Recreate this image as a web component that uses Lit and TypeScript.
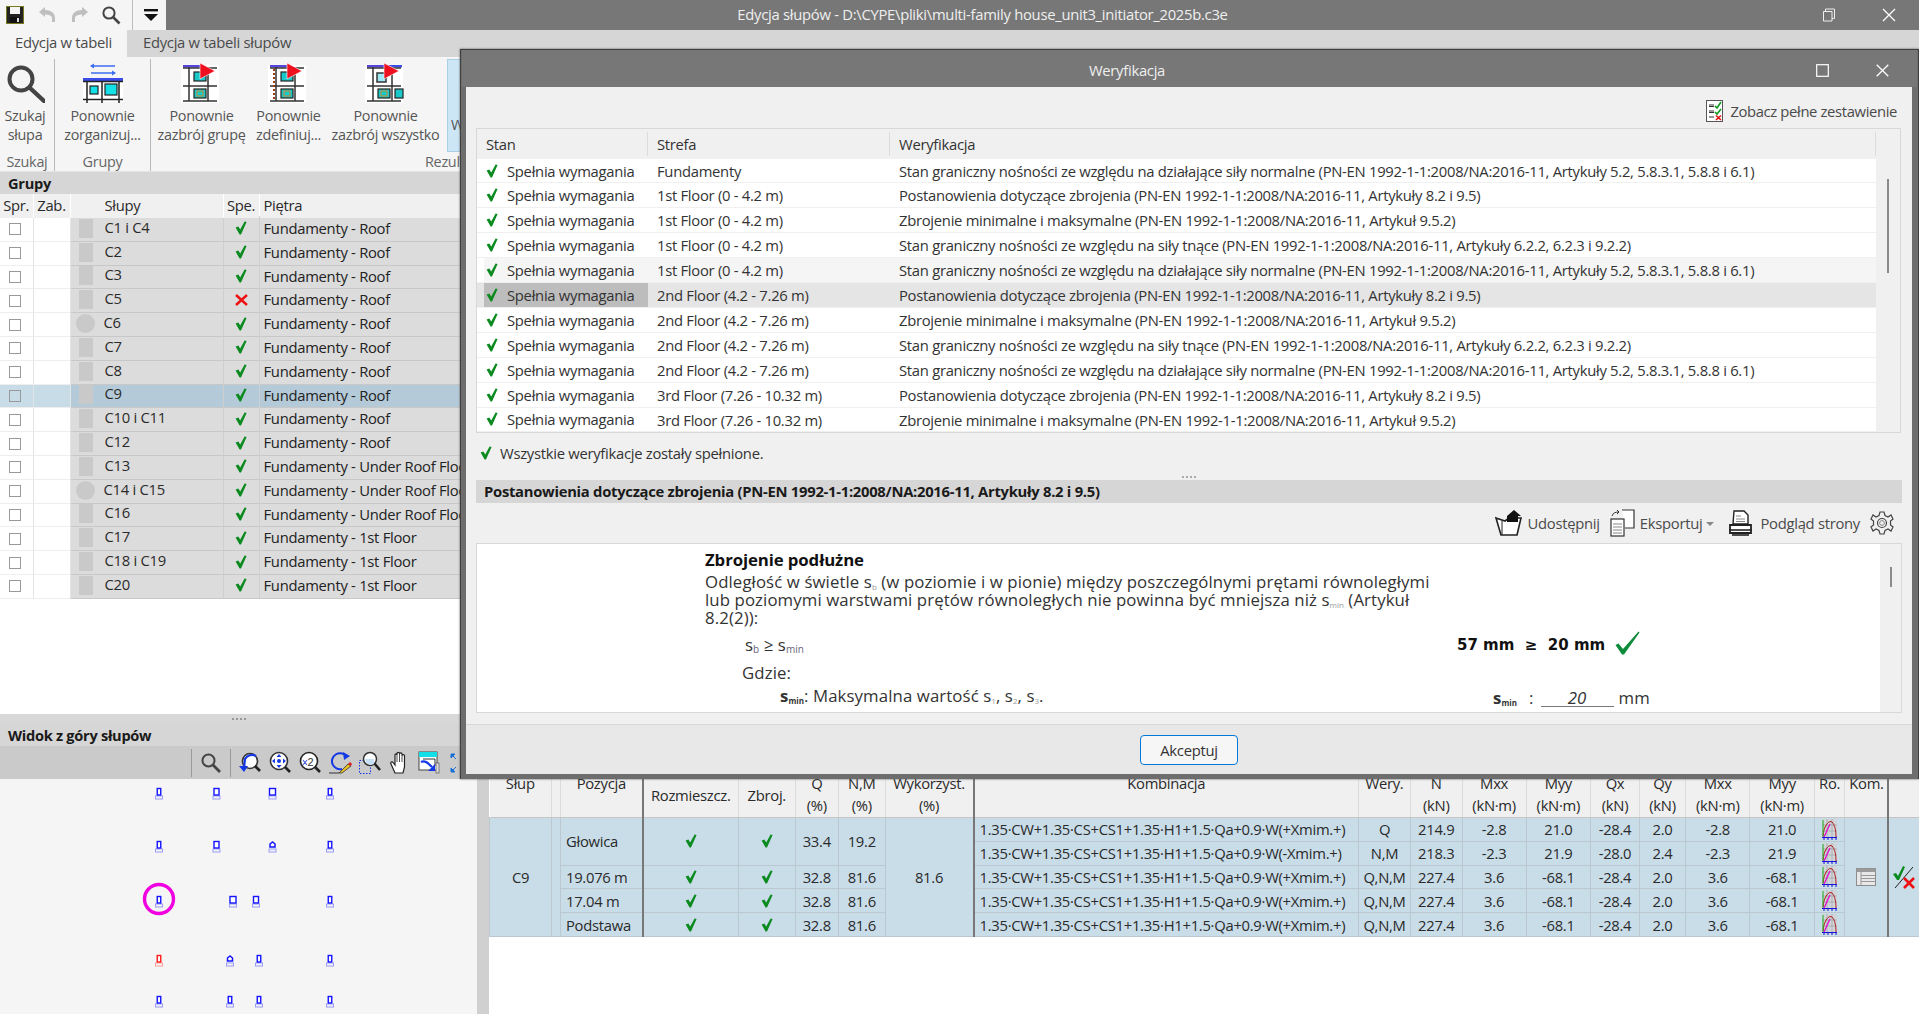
import { LitElement, html, css, svg } from "lit";
import { customElement } from "lit/decorators.js";

const check = (w = 12, h = 14) => html`<svg class="ico" width=${w} height=${h} viewBox="0 0 12 14"><path d="M0.6 6.6 L3.4 5.6 L5.2 8.6 L9.6 0.4 L11.6 0.9 L6 13.6 L4.6 13.6 Z" fill="#0b8a1f"/></svg>`;
const cross = html`<svg class="ico" width="13" height="12" viewBox="0 0 13 12"><path d="M1 1 L12 11 M12 1 L1 11" stroke="#ee1111" stroke-width="2.4"/></svg>`;

const S1 = "Stan graniczny nośności ze względu na działające siły normalne (PN-EN 1992-1-1:2008/NA:2016-11, Artykuły 5.2, 5.8.3.1, 5.8.8 i 6.1)";
const S2 = "Postanowienia dotyczące zbrojenia (PN-EN 1992-1-1:2008/NA:2016-11, Artykuły 8.2 i 9.5)";
const S3 = "Zbrojenie minimalne i maksymalne (PN-EN 1992-1-1:2008/NA:2016-11, Artykuł 9.5.2)";
const S4 = "Stan graniczny nośności ze względu na siły tnące (PN-EN 1992-1-1:2008/NA:2016-11, Artykuły 6.2.2, 6.2.3 i 9.2.2)";
const F1 = "1st Floor (0 - 4.2 m)";
const F2 = "2nd Floor (4.2 - 7.26 m)";
const F3 = "3rd Floor (7.26 - 10.32 m)";

const checks: [string, string][] = [
  ["Fundamenty", S1],
  [F1, S2], [F1, S3], [F1, S4], [F1, S1],
  [F2, S2], [F2, S3], [F2, S4], [F2, S1],
  [F3, S2], [F3, S3],
];

const ROOF = "Fundamenty - Roof";
const UNDER = "Fundamenty - Under Roof Floor";
const FIRST = "Fundamenty - 1st Floor";
const groups = [
  { n: "C1 i C4", f: ROOF }, { n: "C2", f: ROOF }, { n: "C3", f: ROOF },
  { n: "C5", f: ROOF, bad: true }, { n: "C6", f: ROOF, round: true },
  { n: "C7", f: ROOF }, { n: "C8", f: ROOF }, { n: "C9", f: ROOF, sel: true },
  { n: "C10 i C11", f: ROOF }, { n: "C12", f: ROOF }, { n: "C13", f: UNDER },
  { n: "C14 i C15", f: UNDER, round: true }, { n: "C16", f: UNDER },
  { n: "C17", f: FIRST }, { n: "C18 i C19", f: FIRST }, { n: "C20", f: FIRST },
];

const colWidths = [62, 9, 82, 96, 56.5, 43.5, 46.5, 88.5, 385, 52, 51.5, 64.2, 64.3, 49, 46, 64.5, 64.3, 30.7, 43.5, 31];

const KP = "1.35·CW+1.35·CS+CS1+1.35·H1+1.5·Qa+0.9·W(+Xmim.+)";
const KM = "1.35·CW+1.35·CS+CS1+1.35·H1+1.5·Qa+0.9·W(-Xmim.+)";
const results = [
  { k: KP, w: "Q", v: ["214.9", "-2.8", "21.0", "-28.4", "2.0", "-2.8", "21.0"] },
  { k: KM, w: "N,M", v: ["218.3", "-2.3", "21.9", "-28.0", "2.4", "-2.3", "21.9"] },
  { k: KP, w: "Q,N,M", v: ["227.4", "3.6", "-68.1", "-28.4", "2.0", "3.6", "-68.1"] },
  { k: KP, w: "Q,N,M", v: ["227.4", "3.6", "-68.1", "-28.4", "2.0", "3.6", "-68.1"] },
  { k: KP, w: "Q,N,M", v: ["227.4", "3.6", "-68.1", "-28.4", "2.0", "3.6", "-68.1"] },
];

// plan view pins
const pins: [number, number, number][] = [
  [159, 13, 0], [216.5, 13, 1], [272.5, 13, 2], [330, 13, 0],
  [159, 66, 0], [216.5, 66, 1], [272.5, 66, 3], [330, 66, 0],
  [159, 121, 0], [233, 121, 2], [256, 121, 1], [330, 121, 0],
  [159, 180, 4], [230, 180, 3], [259, 180, 0], [330, 180, 0],
  [159, 221, 0], [230, 221, 0], [259, 221, 0], [330, 221, 0],
];

const pin = (x: number, y: number, t: number) => {
  const c = t === 4 ? "#ff1a1a" : "#1414ff";
  const w = t === 2 ? 6 : t === 1 ? 5 : 3.5;
  const shape = t === 3
    ? svg`<path d="M${x - 2.5} ${y + 2} L${x - 2.5} ${y - 1} L${x} ${y - 3} L${x + 2.5} ${y - 1} L${x + 2.5} ${y + 2} Z" fill="#fff" stroke=${c} stroke-width="1.5"/>`
    : svg`<rect x=${x - w / 2} y=${y - 3.5} width=${w} height="6.5" fill="#fff" stroke=${c} stroke-width="1.4"/>`;
  return svg`${shape}<rect x=${x - 3.5} y=${y + 4} width="7" height="3" fill="none" stroke=${c} stroke-opacity=".4"/>`;
};

const ribbonIcon = (kind: number) => html`<svg width="40" height="40" viewBox="0 0 40 40" style="margin-left:-3px">
  <rect x="1" y="2" width="38" height="38" fill="#fff"/>
  <rect x="3" y="2" width="20" height="2.4" fill="#5544dd"/>
  ${kind === 2 ? svg`<rect x="24" y="2" width="14" height="2.4" fill="#3c4ce8"/>` : ""}
  <path d="M3 5 H37 M3 23 H37 M3 38 H37 M9 4 V38.5 M28 4 V38.5" stroke="#333" stroke-width="1.5" fill="none"/>
  ${kind === 1 ? svg`<path d="M7 6 V38" stroke="#a03a10" stroke-width="2" stroke-dasharray="2 2"/>` : ""}
  ${kind === 2
    ? svg`<rect x="13" y="10" width="9" height="9" fill="#9fe8f5" stroke="#333" stroke-width="1.5"/><rect x="31" y="26" width="8" height="9" fill="#19c9c9" stroke="#222" stroke-width="1.2"/>`
    : svg`<rect x="14" y="9" width="12" height="9" fill="#19c9c9" stroke="#222" stroke-width="1.2"/>`}
  <rect x="14" y="26" width="12" height="9" fill="#19c9c9" stroke="#222" stroke-width="1.2"/>
  <rect x="17" y="28" width="6" height="5" fill="none" stroke="#e08020" stroke-width=".9"/>
  <path d="M20 0 L35 8 L20 16 Z" fill="#ee0f1f" stroke="#fff" stroke-width=".6"/>
</svg>`;

const toolIcons = [
  svg`<circle cx="12" cy="10" r="7.5" fill="#fff" stroke="#333" stroke-width="1.6"/><path d="M17 15 L22 20" stroke="#222" stroke-width="2.6"/><path d="M18 5 A8 8 0 0 0 7 8 L6 17" fill="none" stroke="#1438e6" stroke-width="2.2"/><path d="M1 15 L6 21 L10 15 Z" fill="#1438e6"/>`,
  svg`<circle cx="11" cy="10" r="8.5" fill="#fff" stroke="#333" stroke-width="1.6"/><path d="M17 16 L22 21" stroke="#222" stroke-width="2.6"/><path d="M11 3 L8.5 6 H13.5 Z M11 17 L8.5 14 H13.5 Z M4 10 L7 7.5 V12.5 Z M18 10 L15 7.5 V12.5 Z" fill="#1438e6"/><circle cx="11" cy="10" r="2" fill="#1438e6"/>`,
  svg`<circle cx="11" cy="10" r="8.5" fill="#fff" stroke="#222" stroke-width="1.6"/><path d="M17 16 L22 21" stroke="#222" stroke-width="2.6"/><path d="M5 9 L9 14 M9 9 L5 14" stroke="#4a62e0" stroke-width="1.1"/><text x="9.5" y="15" font-size="11" font-family="Liberation Sans" fill="#333">2</text>`,
  svg`<path d="M18 5 A8 8 0 1 0 14 18" fill="none" stroke="#1438e6" stroke-width="2"/><path d="M15 1 L22 5 L16 9 Z" fill="#1438e6"/><path d="M11 22 L20 13 L23 15 L14 22 Z" fill="#e8c020" stroke="#333" stroke-width=".8"/><path d="M20 13 L23 15 L24 13 L22 11 Z" fill="#e02020"/><path d="M1 22 H11" stroke="#333"/>`,
  svg`<rect x="1.5" y="9.5" width="11" height="13" fill="none" stroke="#1438e6" stroke-dasharray="1.5 1.5"/><circle cx="12" cy="8" r="6.5" fill="#fff" stroke="#333" stroke-width="1.5"/><path d="M7 8 H16 V13 A6 6 0 0 1 8 11 Z" fill="#c8e0f4"/><path d="M16.5 12.5 L22 19" stroke="#222" stroke-width="2.6"/>`,
  svg`<path d="M7 22 L3 13 C2 11 4 10 5.5 12 L7 14 V4 C7 2.4 9 2.4 9 4 V2.6 C9 1 11.5 1 11.5 2.6 V3 C11.5 1.6 14 1.6 14 3 V4.6 C14 3.2 16.5 3.2 16.5 4.6 V16 L15 22 Z" fill="#fff" stroke="#222" stroke-width="1.2"/><path d="M9 4 V11 M11.5 3 V11 M14 4 V11" stroke="#222" stroke-width=".8"/>`,
  svg`<rect x="1" y="1" width="18" height="18" fill="#fff" stroke="#444"/><rect x="1" y="1" width="18" height="5" fill="#14dfe8"/><path d="M5 8 H17 V15" fill="none" stroke="#333"/><path d="M3 11 C7 9 10 12 14 16" fill="none" stroke="#1438e6" stroke-width="2.2"/><path d="M10 20 L17 20 L17 13 Z" fill="#1438e6"/><rect x="18" y="12" width="3" height="10" fill="#ddd" stroke="#444" stroke-width=".6"/>`,
  svg`<path d="M3 3 L7 3 L3 7 Z M3 3 L8 8 M3 21 L7 21 L3 17 Z M3 21 L8 16 M21 8 V3 H16 Z" fill="#1a70d8" stroke="#1a70d8"/>`,
];

const roIcon = html`<svg width="15" height="21" viewBox="0 0 15 21"><rect width="15" height="20" fill="#d2d2d2" fill-opacity=".7"/>
  <path d="M0 6 H15 M0 12 H15 M5 0 V20 M10 0 V20" stroke="#9a9a9a" stroke-width=".6"/>
  <path d="M1 17 C2 6 7 1 10 3 C13 6 14 12 14 18" fill="none" stroke="#b01818" stroke-width="1"/>
  <path d="M1 1 V18" stroke="#15b015" stroke-width="1"/><path d="M2 18 L8 5" stroke="#e010d0" stroke-width="1.4"/>
  <path d="M0 18.5 H15 M2 18 V21 M6 18 V21 M10 18 V21 M14 18 V21" stroke="#1414dd" stroke-width="1"/></svg>`;

@customElement("app-root")
export class AppRoot extends LitElement {
  static styles = css`
    :host {
      display: block;
      position: relative;
      width: 100%;
      height: 1014px;
      overflow: hidden;
      font-family: "Open Sans", "Liberation Sans", sans-serif;
      font-size: 14.8px;
      letter-spacing: -0.28px;
      color: #2a2a2a;
      background: #f5f5f5;
    }
    svg { display: block; flex: none; }
    .ico { display: inline-block; }
    .app { display: flex; flex-direction: column; height: 100%; }

    .titlebar { display: flex; height: 30px; background: #777; flex: none; }
    .qat { width: 166px; background: #f5f5f5; display: flex; align-items: center; }
    .qat-btn { display: flex; justify-content: center; }
    .qat-sep { width: 1px; height: 30px; background: #bdbdbd; margin: 0 10px 0 6px; }
    .wintitle { flex: 1; text-align: center; line-height: 28px; color: #efefef; }
    .winctl { display: flex; width: 120px; align-items: center; }
    .winctl div { width: 60px; display: flex; justify-content: center; }

    .tabs { display: flex; height: 27px; background: #d6d6d6; flex: none; line-height: 25px; color: #4a4a4a; }
    .tab { padding: 0 16px; }
    .tab.on { width: 127px; box-sizing: border-box; background: #f5f5f5; text-align: center; padding: 0; }

    .ribbon { display: flex; height: 115px; flex: none; background: #f5f5f5; color: #555; border-bottom: 1px solid #e4e4e4; box-sizing: border-box; font-size: 14.4px; }
    .rgroup { display: flex; flex-direction: column; align-items: stretch; border-right: 1px solid #b8b8b8; margin: 2px 0 0; height: 112px; flex: none; }
    .rgroup.last { border-right: 0; }
    .rbtns { display: flex; height: 93px; flex: none; }
    .rbtn { display: flex; flex-direction: column; align-items: center; padding-top: 2px; text-align: center; line-height: 19px; white-space: nowrap; box-sizing: border-box; }
    .rbtn .pic { height: 44px; display: flex; align-items: center; margin-bottom: 1px; }
    .rlabel { text-align: center; line-height: 19px; color: #666; flex: none; }
    .rhigh { width: 70px; height: 93px; box-sizing: border-box; background: #cde6f6; border: 1px solid #a9cfe6; padding: 55px 0 0 3px; margin-left: 8px; }

    .body { flex: 1; display: flex; min-height: 0; }
    .left { width: 478px; flex: none; display: flex; flex-direction: column; background: #fff; }
    .phead { height: 22px; line-height: 22px; background: #d6d6d6; font-weight: 700; font-size: 14.6px; padding-left: 8px; color: #1a1a1a; flex: none; }
    .ghead, .grow { display: grid; grid-template-columns: 33.5px 37px 153px 36px 1fr; }
    .ghead { height: 24px; background: #f0f0f0; line-height: 22px; flex: none; }
    .ghead div { border-right: 1px solid #fff; text-align: center; white-space: nowrap; }
    .ghead .l { text-align: left; padding-left: 4px; }
    .ghead .sl { text-align: left; padding-left: 34px; }
    .grow { height: 23.8px; flex: none; box-sizing: border-box; border-bottom: 1px solid #c8c8c8; background: #dcdcdc; }
    .grow .w { background: #fff; border-right: 1px solid #e4e4e4; border-bottom: 1px solid #eee; margin-bottom: -1px; display: flex; align-items: center; justify-content: center; }
    .grow.sel { background: #b5cad8; }
    .grow.sel .w { background: #c8dce8; }
    .box { width: 12px; height: 12px; border: 1.5px solid #999; background: #fff; box-sizing: border-box; margin-right: 3px; }
    .sel .box { background: #c8dce8; }
    .cname { display: flex; align-items: center; border-right: 1px solid #cfcfcf; white-space: nowrap; padding-left: 8px; }
    .cname span { margin: -5px 0 0 12px; }
    .sq { width: 14px; height: 19px; background: #c9c9c9; margin-top: -2px; }
    .sq.rd { width: 19px; height: 19px; border-radius: 50%; margin: -2px -3px 0 -3px; }
    .cchk { display: flex; justify-content: center; align-items: center; border-right: 1px solid #cfcfcf; margin-top: -2px; }
    .cfl { padding-left: 4px; white-space: nowrap; line-height: 21px; color: #222; }
    .gfill { flex: 1; background: #fff; }
    .split { height: 10px; background: #d8d8d8; display: flex; justify-content: center; align-items: center; gap: 2px; flex: none; }
    .split i { width: 2px; height: 2px; background: #999; }
    .vbar { display: flex; height: 33px; background: #cacaca; flex: none; align-items: center; padding-left: 191px; }
    .vsearch { width: 38px; height: 28px; border-left: 1px solid #999; border-right: 1px solid #999; display: flex; align-items: center; justify-content: center; margin-right: 4px; }
    .vtool { width: 30px; display: flex; justify-content: center; }
    .canvas { height: 235px; flex: none; background: #f5f5f5; border-right: 1px solid #d0d0d0; }

    .gutter { width: 11px; background: #d0d0d0; flex: none; }
    .right { flex: 1; display: flex; flex-direction: column; background: #fff; min-width: 0; }
    .rspace { height: 601px; flex: none; background: #f0f0f0; }
    table.res { border-collapse: collapse; table-layout: fixed; width: 1430px; flex: none; }
    table.res th { height: 44px; font-weight: 400; background: #f0f0f0; line-height: 22px; border-right: 1px solid #dcdcdc; border-bottom: 1px solid #c6c6c6; text-align: center; vertical-align: middle; padding: 0; white-space: nowrap; overflow: hidden; }
    table.res th .up { margin-top: -2px; }
    table.res td { height: 23.8px; box-sizing: border-box; background: #c9dde9; border: 1px solid #bcc8d0; padding: 0; text-align: center; white-space: nowrap; line-height: 20px; }
    table.res td.t { text-align: left; padding-left: 5px; }
    table.res .thick { border-right: 2px solid #777; }
    table.res td svg, table.res td .ico { margin: 0 auto; display: block; }

    .dialog { position: absolute; left: 460px; top: 49px; width: 1459px; height: 730px; box-sizing: border-box; background: #6d6d6d; border: 1px solid #3f3f3f; border-bottom: 0; padding: 0 6px 5px 5px; display: flex; flex-direction: column; z-index: 5; box-shadow: 0 0 2px #555; }
    .dtitle { height: 37px; flex: none; background: #777; margin: 0 -5px 0 -4px; padding: 3px 5px 0 0; box-sizing: border-box; display: flex; align-items: center; color: #efefef; position: relative; }
    .dtitle .tt { flex: 1; text-align: center; }
    .dclient { flex: 1; background: #f0f0f0; display: flex; flex-direction: column; min-height: 0; color: #333; }
    .dtool { height: 41px; flex: none; display: flex; justify-content: flex-end; align-items: center; padding: 7px 15px 0 0; box-sizing: border-box; gap: 7px; color: #4a4a4a; letter-spacing: -0.36px; }
    .vt { height: 305px; flex: none; margin: 0 11px 0 10px; border: 1px solid #d8d8d8; display: flex; background: #fff; box-sizing: border-box; overflow: hidden; }
    .vmain { flex: 1; min-width: 0; }
    .vrow { display: grid; grid-template-columns: 171px 242px 1fr; height: 24.9px; box-sizing: border-box; border-bottom: 1px solid #f0f0f0; line-height: 24px; white-space: nowrap; }
    .vrow.h { height: 29.6px; background: #f0f0f0; border-bottom: 0; line-height: 29px; }
    .vrow.h div { border-right: 1px solid #dcdcdc; margin: 3px 0; line-height: 25px; padding-left: 9px; }
    .vrow > div { padding-left: 9px; overflow: hidden; }
    .vrow.hov { background: linear-gradient(90deg, #fff 7px, #f5f5f5 7px); }
    .vrow.cur { background: #e5e5e5; }
    .vcell1 { display: flex; align-items: center; gap: 9px; margin-left: 7px; padding-left: 2px !important; }
    .cur .vcell1 { background: #bdbdbd; }
    .scroll { width: 24px; flex: none; background: #f0f0f0; position: relative; }
    .thumb { position: absolute; width: 2px; background: #8b8b8b; }
    .status { height: 40px; flex: none; display: flex; align-items: center; padding-left: 14px; gap: 8px; }
    .dots { height: 7px; flex: none; display: flex; justify-content: center; align-items: center; gap: 2px; }
    .dots i { width: 2px; height: 2px; background: #aaa; }
    .band { height: 23px; flex: none; margin: 0 10px; background: #d6d6d6; font-weight: 700; line-height: 22px; padding-left: 8px; color: #1a1a1a; }
    .doctool { height: 40px; flex: none; display: flex; justify-content: flex-end; align-items: center; padding-right: 18px; color: #4a4a4a; }
    .doctool span { margin-left: 5px; }
    .doc { height: 170px; flex: none; margin: 0 10px; border: 1px solid #d8d8d8; box-sizing: border-box; background: #fff; display: flex; overflow: hidden; }
    .docmain { flex: 1; padding: 6px 0 0 228px; font-size: 16.8px; line-height: 18px; letter-spacing: 0.1px; }
    .doc h4 { margin: 0 0 3px; font-size: 16.8px; line-height: 20px; font-weight: 700; color: #111; letter-spacing: -0.1px; }
    .doc p { margin: 0; width: 745px; }
    .drow { display: grid; grid-template-columns: 752px auto; }
    .f1 { margin-top: 7px; height: 22px; align-items: center; }
    .f2 { margin-top: 8px; padding-left: 37px; }
    .f3 { margin-top: 5px; }
    .f3 > div:first-child { padding-left: 75px; }
    sub { font-size: 8px; line-height: 0; color: #9a9a9a; vertical-align: -2px; letter-spacing: 0; }
    .f1 sub { font-size: 10px; color: #667; }
    .bs sub { color: #333; font-weight: 700; }
    .bs { font-weight: 700; }
    .cmp { display: flex; align-items: center; gap: 10px; font-family: "DejaVu Sans", sans-serif; font-size: 15px; font-weight: 700; color: #111; letter-spacing: 0; white-space: pre; }
    .val { display: flex; padding-left: 36px; align-items: baseline; }
    .u { width: 73px; margin: 0 5px 0 7px; border-bottom: 1px solid #777; font-style: italic; text-align: center; height: 19px; line-height: 21px; }
    .dfoot { flex: 1; margin-top: 11px; background: #e8e8e8; border-top: 1px solid #d8d8d8; display: flex; align-items: center; justify-content: center; }
    .ok { width: 98px; height: 30px; box-sizing: border-box; border: 1px solid #0078d7; border-radius: 4px; background: #f6f6f6; line-height: 28px; text-align: center; color: #333; }
  `;

  render() {
    return html`<div class="app">
      ${this.titlebar()}
      <div class="tabs"><div class="tab on">Edycja w tabeli</div><div class="tab">Edycja w tabeli słupów</div></div>
      ${this.ribbon()}
      <div class="body">
        ${this.leftPanel()}
        <div class="gutter"></div>
        <div class="right"><div class="rspace"></div>${this.resultsTable()}</div>
      </div>
    </div>
    ${this.dialog()}`;
  }

  titlebar() {
    return html`<div class="titlebar">
      <div class="qat">
        <div class="qat-btn" style="width:30px">
          <svg width="18" height="18" viewBox="0 0 18 18"><rect x=".5" y=".5" width="17" height="17" fill="#222" stroke="#7a7a20"/><rect x="4" y="1" width="10" height="7" fill="#f4f4f4"/><rect x="4" y="11" width="10" height="6" fill="#111"/><rect x="11" y="12" width="2" height="4" fill="#ddd"/></svg>
        </div>
        <div class="qat-btn" style="width:33px"><svg width="20" height="18" viewBox="0 0 20 18"><path d="M2 6 L8 1 V4 C14 4 18 7 18 12 V16 H15 V12 C15 10 12 8.5 8 8.5 V11 Z" fill="#bfbfbf"/></svg></div>
        <div class="qat-btn" style="width:33px"><svg width="20" height="18" viewBox="0 0 20 18"><path d="M18 6 L12 1 V4 C6 4 2 7 2 12 V16 H5 V12 C5 10 8 8.5 12 8.5 V11 Z" fill="#bfbfbf"/></svg></div>
        <div class="qat-btn" style="width:30px"><svg width="20" height="20" viewBox="0 0 20 20"><circle cx="8" cy="8" r="5.6" fill="none" stroke="#444" stroke-width="2"/><path d="M12 12 L18.5 18.5" stroke="#444" stroke-width="2.6"/></svg></div>
        <div class="qat-sep"></div>
        <svg width="16" height="14" viewBox="0 0 16 14"><rect x="1" y="1" width="14" height="2.4" fill="#111"/><path d="M1 6 H15 L8 13 Z" fill="#111"/></svg>
      </div>
      <div class="wintitle">Edycja słupów - D:\\CYPE\\pliki\\multi-family house_unit3_initiator_2025b.c3e</div>
      <div class="winctl">
        <div><svg width="14" height="14" viewBox="0 0 14 14"><path d="M3.5 3 V1 H12.5 V10.5 H10 M1.5 3.5 H10 V13 H1.5 Z" fill="none" stroke="#eee"/></svg></div>
        <div><svg width="14" height="14" viewBox="0 0 14 14"><path d="M1 1 L13 13 M13 1 L1 13" stroke="#fff" stroke-width="1.3"/></svg></div>
      </div>
    </div>`;
  }

  ribbon() {
    return html`<div class="ribbon">
      <div class="rgroup" style="width:54px">
        <div class="rbtns"><div class="rbtn" style="width:50px">
          <div class="pic"><svg width="40" height="40" viewBox="0 0 40 40"><circle cx="16" cy="16" r="11.5" fill="none" stroke="#444" stroke-width="4"/><path d="M25 25 L39 38" stroke="#444" stroke-width="4.4" stroke-linecap="round"/></svg></div>
          Szukaj<br />słupa</div></div>
        <div class="rlabel">Szukaj</div>
      </div>
      <div class="rgroup" style="width:95px">
        <div class="rbtns"><div class="rbtn" style="width:95px">
          <div class="pic"><svg width="42" height="40" viewBox="0 0 42 40"><path d="M9 3 H33 M9 10 H33" stroke="#3c6cf0" stroke-width="1.4"/><path d="M8 3 L12 0.5 V5.5 Z M34 10 L30 7.5 V12.5 Z" fill="#3c6cf0"/><rect x="1" y="16" width="40" height="23" fill="#fff"/><rect x="1" y="15" width="40" height="3" fill="#3c4ce8"/><path d="M1 18.5 H41 M1 36.5 H41 M5 18 V40 M20 18 V40 M37 18 V40" stroke="#222" stroke-width="1.5"/><rect x="8" y="23" width="8" height="8" fill="#14e0e8" stroke="#222" stroke-width="1.2"/><rect x="23" y="21" width="12" height="11" fill="#14e0e8" stroke="#222" stroke-width="1.2"/></svg></div>
          Ponownie<br />zorganizuj...</div></div>
        <div class="rlabel">Grupy</div>
      </div>
      <div class="rgroup last" style="flex:1">
        <div class="rbtns" style="padding-left:7px">
          <div class="rbtn" style="width:87px"><div class="pic">${ribbonIcon(0)}</div>Ponownie<br />zazbrój grupę</div>
          <div class="rbtn" style="width:87px"><div class="pic">${ribbonIcon(1)}</div>Ponownie<br />zdefiniuj...</div>
          <div class="rbtn" style="width:107px"><div class="pic">${ribbonIcon(2)}</div>Ponownie<br />zazbrój wszystko</div>
          <div class="rhigh">W</div>
        </div>
        <div class="rlabel" style="text-align:left;padding-left:274px">Rezultaty</div>
      </div>
    </div>`;
  }

  leftPanel() {
    return html`<div class="left">
      <div class="phead">Grupy</div>
      <div class="ghead"><div>Spr.</div><div>Zab.</div><div class="sl">Słupy</div><div>Spe.</div><div class="l">Piętra</div></div>
      ${groups.map((g) => html`<div class="grow ${g.sel ? "sel" : ""}">
        <div class="w"><div class="box"></div></div><div class="w"></div>
        <div class="cname"><div class="sq ${g.round ? "rd" : ""}"></div><span>${g.n}</span></div>
        <div class="cchk">${g.bad ? cross : check()}</div>
        <div class="cfl">${g.f}</div>
      </div>`)}
      <div class="gfill"></div>
      <div class="split"><i></i><i></i><i></i><i></i></div>
      <div class="phead">Widok z góry słupów</div>
      <div class="vbar">
        <div class="vsearch"><svg width="22" height="22" viewBox="0 0 22 22"><circle cx="8.5" cy="8.5" r="6" fill="none" stroke="#444" stroke-width="2"/><path d="M13 13 L20 20" stroke="#444" stroke-width="2.8"/></svg></div>
        ${toolIcons.map((t) => html`<div class="vtool"><svg width="24" height="24" viewBox="0 0 24 24">${t}</svg></div>`)}
      </div>
      <div class="canvas">
        <svg width="477" height="235" viewBox="0 0 477 235">
          ${pins.map(([x, y, t]) => pin(x, y, t))}
          <circle cx="159" cy="120" r="14.5" fill="none" stroke="#f000e0" stroke-width="3.4"/>
        </svg>
      </div>
    </div>`;
  }

  resultsTable() {
    const head: [string, string, string?][] = [
      ["Słup", ""], ["", ""], ["Pozycja", "", "thick"], ["Rozmieszcz.", "-"], ["Zbroj.", "-"],
      ["Q", "(%)"], ["N,M", "(%)"], ["Wykorzyst.", "(%)", "thick"], ["Kombinacja", ""],
      ["Wery.", ""], ["N", "(kN)"], ["Mxx", "(kN·m)"], ["Myy", "(kN·m)"], ["Qx", "(kN)"], ["Qy", "(kN)"],
      ["Mxx", "(kN·m)"], ["Myy", "(kN·m)"], ["Ro.", ""], ["Kom.", "", "thick"], ["", ""],
    ];
    const pos = [["Głowica", "33.4", "19.2"], null, ["19.076 m", "32.8", "81.6"], ["17.04 m", "32.8", "81.6"], ["Podstawa", "32.8", "81.6"]];
    return html`<table class="res">
      <colgroup>${colWidths.map((w) => html`<col style="width:${w}px" />`)}</colgroup>
      <thead><tr>${head.map(([a, b, c]) => html`<th class=${c ?? ""}>
        ${b === "-" ? a : html`<div class="up" style="height:22px">${a}</div><div style="height:22px">${b}</div>`}</th>`)}</tr></thead>
      <tbody>${results.map((r, i) => {
        const p = pos[i];
        const span = i === 0 ? 2 : 1;
        return html`<tr>
          ${i === 0 ? html`<td rowspan="5">C9</td><td rowspan="5"></td>` : ""}
          ${p ? html`<td class="t thick" rowspan=${span}>${p[0]}</td>
            <td rowspan=${span}>${check()}</td><td rowspan=${span}>${check()}</td>
            <td rowspan=${span}>${p[1]}</td><td rowspan=${span}>${p[2]}</td>` : ""}
          ${i === 0 ? html`<td rowspan="5" class="thick">81.6</td>` : ""}
          <td class="t">${r.k}</td><td>${r.w}</td>
          ${r.v.map((v) => html`<td>${v}</td>`)}
          <td>${roIcon}</td>
          ${i === 0 ? html`<td rowspan="5" class="thick"><svg width="20" height="18" viewBox="0 0 20 18"><rect x=".5" y=".5" width="19" height="17" fill="#e8e8e8" stroke="#8c8c8c"/><rect x=".5" y=".5" width="19" height="3.5" fill="#9a9a9a"/><path d="M5 4 V17 M5 7.5 H19 M5 10.5 H19 M5 13.5 H19" stroke="#999"/></svg></td>
            <td rowspan="5"><svg width="24" height="24" viewBox="0 0 24 24"><path d="M1 9 L4 8 L6 11 L11 1 L13 2 L7 15 L5 15 Z" fill="#0b8a1f"/><path d="M3 23 L21 2" stroke="#222" stroke-width="1"/><path d="M12 13 L22 23 M22 13 L12 23" stroke="#ee1111" stroke-width="2.6"/></svg></td>` : ""}
        </tr>`;
      })}</tbody>
    </table>`;
  }

  dialog() {
    return html`<div class="dialog">
      <div class="dtitle"><div class="tt">Weryfikacja</div>
        <div class="winctl">
          <div><svg width="13" height="13" viewBox="0 0 13 13"><rect x=".7" y=".7" width="11.6" height="11.6" fill="none" stroke="#fff" stroke-width="1.2"/></svg></div>
          <div><svg width="13" height="13" viewBox="0 0 13 13"><path d="M.7 .7 L12.3 12.3 M12.3 .7 L.7 12.3" stroke="#fff" stroke-width="1.3"/></svg></div>
        </div>
      </div>
      <div class="dclient">
        <div class="dtool">
          <svg width="17" height="22" viewBox="0 0 17 22"><rect x=".5" y=".5" width="16" height="21" fill="#fff" stroke="#555"/><path d="M3 5 H8 M3 6.5 H8 M3 11 H8 M3 12.5 H8 M3 17 H8" stroke="#333"/><path d="M9 6 L11 8 L15 2" fill="none" stroke="#109a20" stroke-width="1.6"/><path d="M9 12 L11 14 L15 9" fill="none" stroke="#109a20" stroke-width="1.6"/><path d="M10 15.5 L15 20 M15 15.5 L10 20" stroke="#e01010" stroke-width="1.6"/></svg>
          Zobacz pełne zestawienie
        </div>
        <div class="vt">
          <div class="vmain">
            <div class="vrow h"><div>Stan</div><div>Strefa</div><div>Weryfikacja</div></div>
            ${checks.map(([zone, text], i) => html`<div class="vrow ${i === 5 ? "cur" : i === 4 ? "hov" : ""}">
              <div class="vcell1">${check()}<span>Spełnia wymagania</span></div><div>${zone}</div><div>${text}</div>
            </div>`)}
          </div>
          <div class="scroll"><div class="thumb" style="left:11px;top:50px;height:94px"></div></div>
        </div>
        <div class="status">${check()}<span>Wszystkie weryfikacje zostały spełnione.</span></div>
        <div class="dots"><i></i><i></i><i></i><i></i></div>
        <div class="band">Postanowienia dotyczące zbrojenia (PN-EN 1992-1-1:2008/NA:2016-11, Artykuły 8.2 i 9.5)</div>
        <div class="doctool">
          <svg width="28" height="26" viewBox="0 0 28 26"><path d="M1 8 L10 11 L14 8 H26 L22 25 H6 Z" fill="#fff" stroke="#222" stroke-width="1.6"/><path d="M7 11 V25" stroke="#222"/><path d="M19 0 L26 6 H23 V12 H12 V6 H12 Z" fill="#111"/></svg>
          <span style="margin-right:10px">Udostępnij</span>
          <svg width="25" height="28" viewBox="0 0 25 28"><path d="M12 1 H24 V19 H15" fill="#fff" stroke="#333" stroke-width="1.2"/><rect x="1" y="10" width="13" height="17" fill="#fff" stroke="#333" stroke-width="1.2"/><path d="M3 15 H12 M3 18 H12 M3 21 H12 M3 24 H12" stroke="#888"/><path d="M2 7 C3 4 5 3 9 3 M9 3 L7 1 M9 3 L7 5" fill="none" stroke="#333"/></svg>
          <span>Eksportuj</span>
          <svg width="8" height="4" viewBox="0 0 8 4" style="margin:2px 14px 0 4px"><path d="M0 0 H8 L4 4 Z" fill="#888"/></svg>
          <svg width="25" height="26" viewBox="0 0 25 26"><path d="M6 1 H16 L20 5 V14 H5 Z" fill="#fff" stroke="#222" stroke-width="1.4"/><path d="M8 6 H13 M8 9 H17 M8 11.5 H17" stroke="#888"/><path d="M2 15 H23 V23 H2 Z" fill="#fff" stroke="#222" stroke-width="1.8"/><path d="M1 20 H24" stroke="#222" stroke-width="1.6"/><path d="M4 25 H21" stroke="#222" stroke-width="1.6"/></svg>
          <span style="margin:0 10px 0 7px">Podgląd strony</span>
          <svg width="24" height="24" viewBox="0 0 24 24"><path d="M10 1 H14 L15 4.5 L18 6 L21 4 L23 8 L20.5 10 V14 L23 16 L21 20 L18 18 L15 19.5 L14 23 H10 L9 19.5 L6 18 L3 20 L1 16 L3.5 14 V10 L1 8 L3 4 L6 6 L9 4.5 Z" fill="none" stroke="#444" stroke-width="1.2"/><circle cx="12" cy="12" r="4.5" fill="none" stroke="#444" stroke-width="1.2"/><circle cx="12" cy="12" r="2.4" fill="none" stroke="#888"/></svg>
        </div>
        <div class="doc">
          <div class="docmain">
            <h4>Zbrojenie podłużne</h4>
            <p>Odległość w świetle s<sub>b</sub> (w poziomie i w pionie) między poszczególnymi prętami równoległymi lub poziomymi warstwami prętów równoległych nie powinna być mniejsza niż s<sub>min</sub> (Artykuł 8.2(2)):</p>
            <div class="drow f1">
              <div style="padding-left:40px">s<sub>b</sub> ≥ s<sub>min</sub></div>
              <div class="cmp"><span>57 mm  ≥  20 mm</span><svg width="25" height="24" viewBox="0 0 25 24" style="margin-top:-4px"><path d="M0.5 14 L3.5 12.5 L8 18 L23.5 0.5 L24.5 1.5 L9 23.5 L7 23.5 Z" fill="#0d8a3a"/></svg></div>
            </div>
            <div class="f2">Gdzie:</div>
            <div class="drow f3">
              <div><span class="bs">s<sub>min</sub></span>: Maksymalna wartość s<sub>1</sub>, s<sub>2</sub>, s<sub>3</sub>.</div>
              <div class="val"><span class="bs">s<sub>min</sub></span><span style="margin-left:12px">:</span><span class="u">20</span><span>mm</span></div>
            </div>
          </div>
          <div class="scroll" style="width:21px;background:#f0f0f0"><div class="thumb" style="left:10px;top:23px;height:20px"></div></div>
        </div>
        <div class="dfoot"><div class="ok">Akceptuj</div></div>
      </div>
    </div>`;
  }
}
